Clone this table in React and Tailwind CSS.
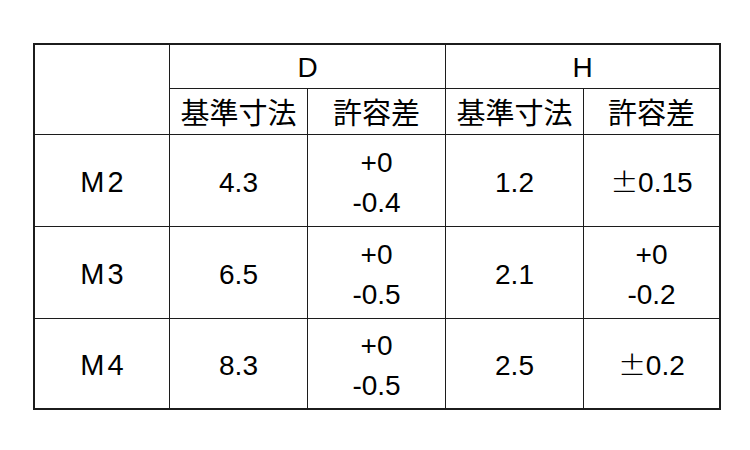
const latin = "font-['Liberation_Sans','Arial',sans-serif]";
const cjk = "font-['Noto_Sans_CJK_JP','Noto_Sans_CJK_SC',sans-serif]";

function Cell({ children, className = '' }) {
    return (
        <div className={'bg-white flex flex-col items-center justify-center text-black ' + className}>
            {children}
        </div>
    );
}

function Tol({ plus, minus }) {
    return (
        <div className="flex flex-col items-center leading-[40px]">
            <span>{plus}</span>
            <span>{minus}</span>
        </div>
    );
}

// ± in the reference is a wide glyph
function PlusMinus({ value }) {
    return (
        <span className="flex items-baseline">
            <span className="font-['DejaVu_Sans',sans-serif] font-extralight text-[33px] leading-none">±</span>
            <span>{value}</span>
        </span>
    );
}

const rows = [
    { size: 'M2', d: '4.3', dTol: ['+0', '-0.4'], h: '1.2', hTol: '0.15' },
    { size: 'M3', d: '6.5', dTol: ['+0', '-0.5'], h: '2.1', hTol: ['+0', '-0.2'] },
    { size: 'M4', d: '8.3', dTol: ['+0', '-0.5'], h: '2.5', hTol: '0.2' },
];

export default function App() {
    return (
        <div className={'w-[750px] h-[450px] bg-white pt-[43px] pl-[33px] ' + latin}>
            <div
                className={
                    'w-[688px] h-[367px] border-2 border-[#1c1c1c] bg-[#1c1c1c] grid gap-px ' +
                    'grid-cols-[134px_137px_137px_137px_135px] grid-rows-[43px_45px_91px_91px_89px]'
                }
            >
                {/* header */}
                <Cell className="row-span-2" />
                <Cell className="col-span-2 text-[28px] pt-[2px]">D</Cell>
                <Cell className="col-span-2 text-[28px] pt-[2px]">H</Cell>
                <Cell className={'text-[29px] ' + cjk}>基準寸法</Cell>
                <Cell className={'text-[29px] ' + cjk}>許容差</Cell>
                <Cell className={'text-[29px] ' + cjk}>基準寸法</Cell>
                <Cell className={'text-[29px] ' + cjk}>許容差</Cell>

                {/* body */}
                {rows.map((r) => (
                    <div key={r.size} className="contents">
                        <Cell className="text-[29px] tracking-[3px] pl-[3px] pt-[4px]">{r.size}</Cell>
                        <Cell className="text-[28px] pt-[4px]">{r.d}</Cell>
                        <Cell className="text-[28px] pt-[4px]">
                            <Tol plus={r.dTol[0]} minus={r.dTol[1]} />
                        </Cell>
                        <Cell className="text-[28px] pt-[4px]">{r.h}</Cell>
                        <Cell className="text-[28px] pt-[4px]">
                            {Array.isArray(r.hTol) ? (
                                <Tol plus={r.hTol[0]} minus={r.hTol[1]} />
                            ) : (
                                <PlusMinus value={r.hTol} />
                            )}
                        </Cell>
                    </div>
                ))}
            </div>
        </div>
    );
}
